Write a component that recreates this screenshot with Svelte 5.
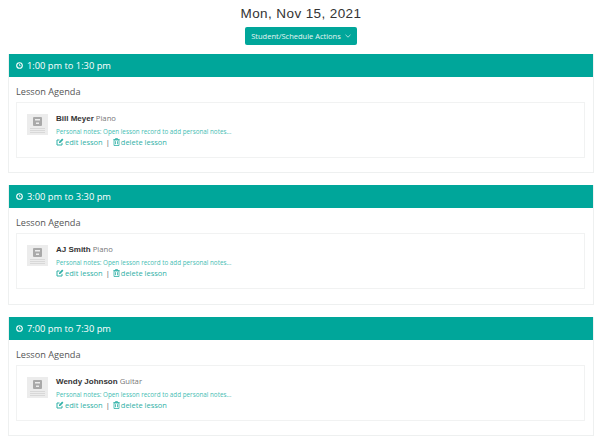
<script>
  const lessons = [
    { time: "1:00 pm to 1:30 pm", student: "Bill Meyer", instrument: "Piano" },
    { time: "3:00 pm to 3:30 pm", student: "AJ Smith", instrument: "Piano" },
    { time: "7:00 pm to 7:30 pm", student: "Wendy Johnson", instrument: "Guitar" }
  ];
</script>

<style>
  :global(body) {
    background: #fff;
    font-family: "Open Sans", sans-serif;
  }

  .page {
    padding: 6px 6px 0 8px;
  }

  h1 {
    margin: 0;
    text-align: center;
    font-family: "Liberation Sans", sans-serif;
    font-size: 13.500px;
    font-weight: 400;
    line-height: 16px;
    letter-spacing: 0.4px;
    color: #333;
  }

  .actions-wrap {
    display: flex;
    justify-content: center;
    margin: 5px 0 9px;
  }

  .actions-btn {
    display: flex;
    align-items: center;
    gap: 4px;
    height: 18px;
    padding: 0 6px;
    border: none;
    border-radius: 2px;
    background: #00a69a;
    color: #e6f6f5;
    font-family: "Open Sans", sans-serif;
    font-size: 7.500px;
  }

  .panel {
    height: 119.250px;
    margin-bottom: 12px;
    border: 1px solid #eef0f0;
    border-top: none;
    box-sizing: border-box;
  }

  .panel-head {
    display: flex;
    align-items: center;
    gap: 4px;
    height: 23px;
    padding-left: 7px;
    background: #00a69a;
    color: #fff;
    font-size: 9.300px;
  }

  h2 {
    margin: 8px 0 3px 7px;
    font-size: 9.200px;
    font-weight: 400;
    line-height: 14px;
    color: #555;
  }

  .lesson {
    display: flex;
    gap: 8px;
    height: 56px;
    margin: 0 8px 0 7px;
    padding: 11px 0 0 10px;
    border: 1px solid #f1f2f2;
    box-sizing: border-box;
  }

  .thumb {
    display: flex;
    flex-direction: column;
    align-items: center;
    flex: none;
    width: 21px;
    height: 21px;
    padding-top: 3px;
    box-sizing: border-box;
    background: #ececec;
  }

  .thumb-lines {
    width: 15px;
    margin-top: 2px;
    height: 5px;
    background: repeating-linear-gradient(#d8d8d8 0 1px, transparent 1px 2px);
  }

  .name {
    font-size: 7.700px;
    line-height: 9px;
    color: #777;
  }

  .name b {
    font-family: "Liberation Sans", sans-serif;
    font-size: 8px;
    font-weight: 700;
    color: #333;
  }

  .notes {
    margin-top: 4px;
    font-size: 6.300px;
    line-height: 9px;
    color: #45bdb3;
  }

  .links {
    display: flex;
    align-items: center;
    gap: 3px;
    font-size: 7.500px;
    line-height: 12px;
    color: #2fb0a6;
  }

  .links a {
    display: flex;
    align-items: center;
    gap: 1px;
  }

  .sep {
    color: #555;
  }
</style>

<div class="page">
  <h1>Mon, Nov 15, 2021</h1>

  <div class="actions-wrap">
    <button class="actions-btn">
      Student/Schedule Actions
      <svg width="6" height="4" viewBox="0 0 6 4"><path d="M.5.8 3 3.2 5.500.8" fill="none" stroke="#cdeeeb" stroke-width=".8" /></svg>
    </button>
  </div>

  {#each lessons as lesson}
    <section class="panel">
      <div class="panel-head">
        <svg width="7" height="7" viewBox="0 0 7 7"><circle cx="3.500" cy="3.500" r="2.800" fill="none" stroke="#fff" stroke-width="1.100" /><path d="M3.500 2v1.700h1.200" fill="none" stroke="#fff" stroke-width=".7" /></svg>
        {lesson.time}
      </div>
      <h2>Lesson Agenda</h2>
      <div class="lesson">
        <div class="thumb">
          <svg width="9" height="9" viewBox="0 0 9 9"><rect width="9" height="9" rx="1" fill="#a9a9a9" /><rect x="2" y="2" width="5" height="1.500" fill="#ececec" /><rect x="3" y="5.500" width="3" height="1.500" fill="#ececec" /></svg>
          <div class="thumb-lines"></div>
        </div>
        <div>
          <div class="name"><b>{lesson.student}</b> {lesson.instrument}</div>
          <div class="notes">Personal notes: Open lesson record to add personal notes...</div>
          <div class="links">
            <a>
              <svg width="8" height="8" viewBox="0 0 8 8"><path d="M6 4.800V7H1V2h2.500" fill="none" stroke="#2fb0a6" /><path d="M3 5V3.800L6.200.6l1.200 1.200L4.200 5z" fill="#2fb0a6" /></svg>
              edit lesson
            </a>
            <span class="sep">|</span>
            <a>
              <svg width="7" height="8" viewBox="0 0 7 8"><path d="M1 2h5v5.500H1zM.3 1.500h6.400M2.500 1.500V.5h2v1M2.500 3.200v3M4.500 3.200v3" fill="none" stroke="#2fb0a6" stroke-width=".8" /></svg>
              delete lesson
            </a>
          </div>
        </div>
      </div>
    </section>
  {/each}
</div>
